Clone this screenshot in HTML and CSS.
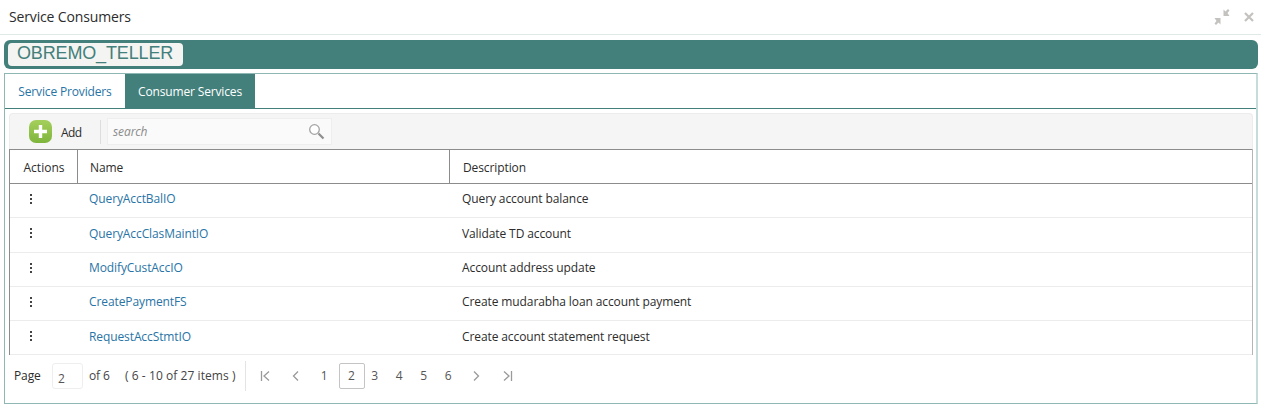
FILE: index.html
```html
<!DOCTYPE html>
<html lang="en">
<head>
<meta charset="utf-8">
<title>Service Consumers</title>
<link rel="stylesheet" href="styles.css">
</head>
<body>
<header class="title-bar">
  <h1 class="title">Service Consumers</h1>
  <div class="window-actions">
    <svg class="icon-win" width="16" height="16" viewBox="0 0 16 16"><path d="M15.500 1.500 14 0 11.500 2.500 9.500 .5v6.500H15.500L13.500 4zM.5 14.500 2 16 4.500 13.500 6.500 15.500V9H.5L2.500 12z" fill="#c4c2bf"/></svg>
    <svg class="icon-win" width="10" height="10" viewBox="0 0 10 10"><path d="M1 1l8 8M9 1l-8 8" stroke="#c4c2bf" stroke-width="2.200" fill="none"/></svg>
  </div>
</header>
<div class="name-bar"><span class="name-chip">OBREMO_TELLER</span></div>
<section class="panel">
  <nav class="tabs">
    <a class="tab">Service Providers</a>
    <a class="tab tab-active">Consumer Services</a>
  </nav>
  <div class="content">
    <div class="toolbar">
      <button class="add-btn">
        <svg width="23" height="23" viewBox="0 0 23 23"><defs><linearGradient id="g" x1="0" y1="0" x2="0" y2="1"><stop offset="0" stop-color="#a5cf5c"/><stop offset="1" stop-color="#7fb53c"/></linearGradient></defs><rect width="23" height="23" rx="7" fill="url(#g)"/><path d="M11.500 5v13M5 11.500h13" stroke="#fff" stroke-width="3.400"/></svg>
        <span class="add-label">Add</span>
      </button>
      <span class="toolbar-sep"></span>
      <div class="search">
        <span class="search-text">search</span>
        <svg width="17" height="17" viewBox="0 0 17 17"><circle cx="6.500" cy="6.500" r="4.800" fill="#fff" stroke="#a3a3a3" stroke-width="1.300"/><path d="M10.500 10.500l5 5" stroke="#8f8f8f" stroke-width="2.200"/></svg>
      </div>
    </div>
    <div class="grid">
      <div class="cell head">Actions</div><div class="cell head">Name</div><div class="cell head last">Description</div>
      <div class="cell act"><span class="dots"><i></i><i></i><i></i></span></div><div class="cell name"><a>QueryAcctBalIO</a></div><div class="cell last">Query account balance</div>
      <div class="cell act"><span class="dots"><i></i><i></i><i></i></span></div><div class="cell name"><a>QueryAccClasMaintIO</a></div><div class="cell last">Validate TD account</div>
      <div class="cell act"><span class="dots"><i></i><i></i><i></i></span></div><div class="cell name"><a>ModifyCustAccIO</a></div><div class="cell last">Account address update</div>
      <div class="cell act"><span class="dots"><i></i><i></i><i></i></span></div><div class="cell name"><a>CreatePaymentFS</a></div><div class="cell last">Create mudarabha loan account payment</div>
      <div class="cell act"><span class="dots"><i></i><i></i><i></i></span></div><div class="cell name"><a>RequestAccStmtIO</a></div><div class="cell last">Create account statement request</div>
    </div>
    <div class="pager">
      <span class="pager-label">Page</span>
      <span class="page-input">2</span>
      <span class="pager-of">of 6</span>
      <span class="pager-items">( 6 - 10 of 27 items )</span>
      <span class="pager-sep"></span>
      <svg class="pg-icon first" width="10" height="10" viewBox="0 0 10 10"><path d="M1.500 0v10M9 .5 4 5l5 4.500" stroke="#9a9a9a" stroke-width="1.300" fill="none"/></svg>
      <svg class="pg-icon prev" width="7" height="10" viewBox="0 0 7 10"><path d="M6 .5 1.500 5 6 9.500" stroke="#9a9a9a" stroke-width="1.300" fill="none"/></svg>
      <span class="pg">1</span><span class="pg pg-current">2</span><span class="pg">3</span><span class="pg">4</span><span class="pg">5</span><span class="pg">6</span>
      <svg class="pg-icon next" width="7" height="10" viewBox="0 0 7 10"><path d="M1 .5 5.500 5 1 9.500" stroke="#9a9a9a" stroke-width="1.300" fill="none"/></svg>
      <svg class="pg-icon last-p" width="10" height="10" viewBox="0 0 10 10"><path d="M8.500 0v10M1 .5 6 5 1 9.500" stroke="#9a9a9a" stroke-width="1.300" fill="none"/></svg>
    </div>
  </div>
</section>
</body>
</html>
```
FILE: styles.css
```css
* { box-sizing: border-box; }
html, body { margin: 0; height: 100%; }
body {
  background: #fff;
  color: #2c2c2c;
  font-family: "Open Sans", "Noto Sans", sans-serif;
  font-size: 12px;
  letter-spacing: -0.1px;
  overflow: hidden;
}
.title-bar {
  height: 35px;
  display: flex;
  align-items: center;
  justify-content: space-between;
  padding: 0 7px 1px 9px;
  border-bottom: 1px solid #dfe9e8;
}
.title { margin: 0; font-size: 14px; font-weight: 400; letter-spacing: -0.15px; }
.window-actions { display: flex; align-items: center; gap: 14px; }
.name-bar {
  margin: 5px 3px 0 4px;
  height: 29px;
  background: #43807b;
  border-radius: 6px;
  display: flex;
  align-items: center;
  padding: 0 4px;
}
.name-chip {
  width: 175px;
  height: 23px;
  background: #f4f4f2;
  border-radius: 4px;
  color: #43807b;
  font-family: "Liberation Sans", Arial, sans-serif;
  font-size: 18px;
  letter-spacing: -0.15px;
  padding-left: 9px;
  line-height: 21px;
}
.panel {
  margin: 4px 3px 0 4px;
  height: 331px;
  border: 1px solid #8fb8b4;
  border-right-width: 2px;
  border-right-color: #c5dcda;
}
.tabs {
  height: 35px;
  display: flex;
  border-bottom: 1px solid #43807b;
}
.tab { height: 34px; line-height: 35px; color: #2874a6; letter-spacing: -0.15px; }
.tab:first-child { width: 120px; text-align: center; }
.tab-active { width: 130px; text-align: center; background: #43807b; color: #fff; }
.content { padding: 4px 3px 0 4px; }
.toolbar {
  height: 36px;
  background: #f5f5f5;
  border: 1px solid #ececec;
  border-bottom: none;
  border-radius: 4px 4px 0 0;
  display: flex;
  align-items: center;
  padding-left: 19px;
}
.add-btn {
  display: flex;
  align-items: center;
  gap: 9px;
  width: 71px;
  padding: 0;
  border: 0;
  background: none;
  color: #2c2c2c;
  font: inherit;
}
.add-label { letter-spacing: -0.6px; padding-top: 1px; }
.toolbar-sep { width: 1px; height: 24px; background: #dddddd; }
.search {
  margin-left: 6px;
  width: 225px;
  height: 27px;
  background: #fafafa;
  border: 1px solid #eeeeee;
  display: flex;
  align-items: center;
  justify-content: space-between;
  padding: 0 6px 1px 5px;
}
.search-text { color: #8c8c8c; font-style: italic; padding-top: 1px; }
.grid {
  display: grid;
  grid-template-columns: 68px 372px 1fr;
  grid-template-rows: 35px;
  grid-auto-rows: 34.3px;
  border-left: 1px solid #8c8c8c;
  border-right: 1px solid #b5b5b5;
}
.cell {
  display: flex;
  align-items: center;
  padding-left: 12px;
  border-bottom: 1px solid #ececec;
  padding-bottom: 3.500px;
}
.head {
  border-top: 1px solid #8c8c8c;
  border-bottom: 1px solid #8c8c8c;
  border-right: 1px solid #8c8c8c;
  padding-top: 1px;
  padding-bottom: 0;
}
.head:first-child { justify-content: center; padding-left: 1px; letter-spacing: 0; }
.head.last { border-right: none; padding-left: 13px; }
.act { padding-left: 20px; padding-bottom: 1px; }
.name { padding-left: 11px; }
.name a { color: #2874a6; }
.dots { display: flex; flex-direction: column; gap: 2px; padding-bottom: 2px; }
.dots i { display: block; width: 2px; height: 2px; background: #444; }
.pager {
  height: 40px;
  display: flex;
  align-items: center;
  padding-left: 5px;
  margin-top: 0.500px;
}
.pager-label { width: 38px; }
.page-input {
  width: 31px;
  height: 26px;
  border: 1px solid #eeeeee;
  border-radius: 3px;
  padding: 7px 0 0 5px;
  line-height: 16px;
  background: #fff;
  color: #555;
}
.pager-of { margin-left: 6px; width: 36px; color: #444; }
.pager-items { width: 120px; color: #444; letter-spacing: 0.06px; }
.pager-sep { width: 1px; height: 30px; background: #e4e4e4; }
.pg-icon { flex: none; }
.first { margin-left: 14px; }
.prev { margin-left: 22px; }
.pg { width: 24.500px; height: 26px; line-height: 26px; text-align: center; color: #555; }
.prev + .pg { margin-left: 13px; }
.pg-current { width: 26px; border: 1px solid #c4c4c4; border-radius: 2px; line-height: 24px; margin: 0 -2px 0 2px; }
.next { margin-left: 12px; }
.last-p { margin-left: 23px; }
```
